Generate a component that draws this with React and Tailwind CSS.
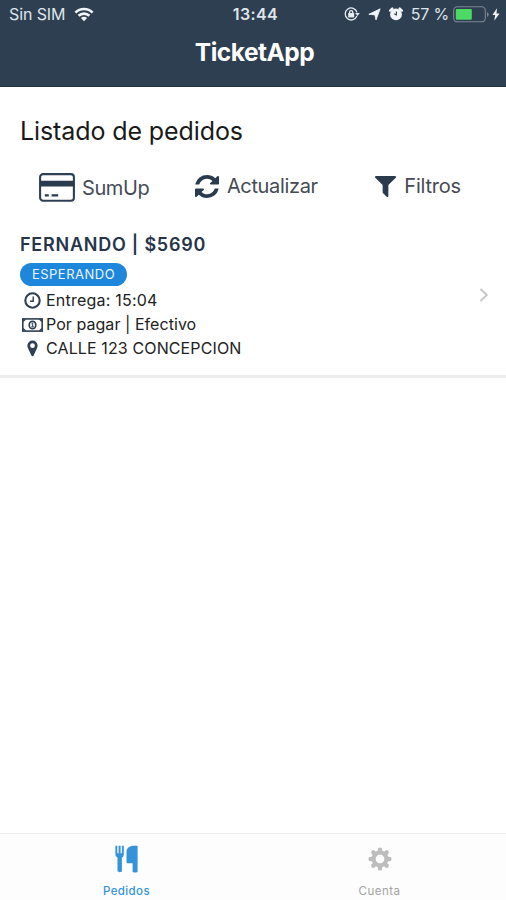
// Iconos de la barra de estado
const WifiIcon = () => (
    <svg className="w-[20px] h-[15px]" viewBox="0 0 20 15" fill="none" stroke="#f1f5f8" strokeWidth="2.6">
        <path d="M1.4 5.6a12.2 12.2 0 0 1 17.2 0" />
        <path d="M4.6 8.8a7.7 7.7 0 0 1 10.8 0" />
        <path d="M10 14.2 6.9 11.1a4.4 4.4 0 0 1 6.2 0z" fill="#f1f5f8" stroke="none" />
    </svg>
);

const RotationLockIcon = () => (
    <svg className="w-[16px] h-[14px]" viewBox="0 0 16 14" fill="none" stroke="#e8edf1" strokeWidth="1.3">
        <path d="M12.9 8.9A6 6 0 1 1 13 5.4" />
        <path d="m11.2 6 4.6 0-2.3 3z" fill="#e8edf1" stroke="none" />
        <rect x="4.2" y="6" width="6" height="4.4" fill="#e8edf1" stroke="none" />
        <path d="M5.6 6.5V5.2a1.6 1.6 0 0 1 3.2 0v1.3" />
    </svg>
);

const LocationIcon = () => (
    <svg className="w-[13px] h-[13px]" viewBox="0 0 13 13" fill="#f1f5f8" stroke="#f1f5f8" strokeWidth=".8" strokeLinejoin="round">
        <path d="M12.2.8 8 12 6.9 6.9.8 6.3z" />
    </svg>
);

const AlarmIcon = () => (
    <svg className="w-[14px] h-[14px]" viewBox="0 0 14 14">
        <circle cx="7" cy="7.4" r="5.9" fill="#f1f5f8" />
        <path d="M1.2 3.6 3.3 1.6M12.8 3.6l-2.1-2" stroke="#f1f5f8" strokeWidth="2.4" strokeLinecap="round" />
        <path d="M7.4 4.6v3.3L5.2 6.8" fill="none" stroke="#2e3f51" strokeWidth="1.1" />
    </svg>
);

const BatteryIcon = () => (
    <svg className="w-[37px] h-[17px]" viewBox="0 0 37 17">
        <rect x=".7" y=".8" width="31.6" height="15" rx="3.6" fill="none" stroke="#7c8894" strokeWidth="1.1" />
        <rect x="2.8" y="3" width="16" height="10.8" rx="1" fill="#4cd964" />
        <path d="M34 6v5a2.7 2.7 0 0 0 0-5z" fill="#7c8894" />
    </svg>
);

const BoltIcon = () => (
    <svg className="w-[8px] h-[13px]" viewBox="0 0 8 13" fill="#f1f5f8">
        <path d="M5 .3.4 7.1h2.8L2.2 12.7 7.6 5.4H4.5z" />
    </svg>
);

// Iconos de las acciones
const CardIcon = () => (
    <svg className="w-[36px] h-[29px]" viewBox="0 0 36 29">
        <rect x="1.1" y="1.1" width="33.8" height="26.6" rx="3" fill="none" stroke="#2e4052" strokeWidth="2.1" />
        <path d="M1 7.8h34v5.8H1z" fill="#2a3b4e" />
        <path d="M5.8 22.4h4M12.6 22.4h6.6" stroke="#2a3b4e" strokeWidth="2.2" />
    </svg>
);

const RefreshIcon = () => (
    <svg className="w-[24px] h-[23px]" viewBox="0 0 1536 1536" preserveAspectRatio="none" fill="#2a3b4e">
        <path d="M1511 928q0 5-1 7-64 268-268 434.500t-478 166.500q-146 0-282.500-55t-243.500-157l-129 129q-19 19-45 19t-45-19-19-45v-448q0-26 19-45t45-19h448q26 0 45 19t19 45-19 45l-137 137q71 66 161 102t187 36q134 0 250-65t186-179q11-17 53-117 8-23 30-23h192q13 0 22.500 9.500t9.500 22.500zm25-800v448q0 26-19 45t-45 19h-448q-26 0-45-19t-19-45 19-45l138-138q-148-137-349-137-134 0-250 65t-186 179q-11 17-53 117-8 23-30 23h-199q-13 0-22.500-9.500t-9.500-22.500v-7q65-268 270-434.500t480-166.500q146 0 284 55.500t245 156.500l130-129q19-19 45-19t45 19 19 45z" />
    </svg>
);

const FilterIcon = () => (
    <svg className="w-[21px] h-[21px]" viewBox="192 256 1408 1408" fill="#2a3b4e">
        <path d="M1595 295q17 41-14 70l-493 493v742q0 42-39 59-13 5-25 5-27 0-45-19l-256-256q-19-19-19-45v-486l-493-493q-31-29-14-70 17-39 59-39h1280q42 0 59 39z" />
    </svg>
);

// Iconos del pedido
const ClockIcon = () => (
    <svg className="w-[17px] h-[17px]" viewBox="0 0 17 17" fill="none" stroke="#2e4052">
        <circle cx="8.5" cy="8.5" r="7.2" strokeWidth="2.1" />
        <path d="M9.2 4.5v4.7H6" strokeWidth="1.4" />
    </svg>
);

const MoneyIcon = () => (
    <svg className="w-[21px] h-[14px]" viewBox="0 0 21 14" fill="none" stroke="#2e4052">
        <rect x=".8" y=".9" width="19.4" height="12.2" strokeWidth="1.6" />
        <path d="M1.2 1.2h3.2L1.2 4.2zM19.8 1.2h-3.200l3.200 3zM1.2 12.8h3.200L1.2 9.8zM19.8 12.8h-3.200l3.200-3z" fill="#2e4052" stroke="none" />
        <ellipse cx="10.5" cy="7" rx="3.3" ry="3.7" strokeWidth="1.7" />
        <path d="M9.5 5.9l1.2-.8v3.6M9.3 8.8h2.6" strokeWidth="1" />
    </svg>
);

const PinIcon = () => (
    <svg className="w-[11px] h-[17px]" viewBox="0 0 11 17" fill="#2e4052">
        <path
            fillRule="evenodd"
            d="M5.5.5a5.1 5.1 0 0 1 5.100 5.100c0 .8-.1 1.500-.4 2.100L6.600 15.600c-.4.900-1.800.9-2.200 0L.8 7.700C.5 7.100.4 6.400.4 5.600A5.100 5.100 0 0 1 5.500.5zm0 2.800a2.400 2.400 0 1 0 0 4.800 2.400 2.400 0 0 0 0-4.800z"
        />
    </svg>
);

// Iconos del menú inferior
const CutleryIcon = () => (
    <svg className="w-[23px] h-[28px]" viewBox="0 0 23 28" fill="#3593d9">
        <path d="M.4.8h1.900v7.400h1.300V.8h2v7.400h1.300V.8h1.900v8.400c0 1.800-.8 2.900-1.900 3.400v13.400c0 1.600-4.400 1.600-4.400 0V12.600C1.400 12 .4 10.900.4 9.200z" />
        <path d="M22.600 1.200v25.200c0 1.500-5 1.500-5 0v-8.200h-5.200c-.6 0-.9-.4-.9-.9V6.800C11.500 2.900 14.800.7 18.800.7h3.100c.5 0 .7.2.7.5z" />
    </svg>
);

const teeth = [0, 45, 90, 135];

const GearIcon = () => (
    <svg className="w-[24px] h-[24px]" viewBox="0 0 24 24" stroke="#bdbdbd">
        {teeth.map((angle) => (
            <g key={angle} transform={`rotate(${angle} 12 12)`} strokeWidth="4.4" strokeLinecap="round">
                <path d="M12 2.6v2.6M12 18.8v2.6" />
            </g>
        ))}
        <circle cx="12" cy="12" r="6.4" fill="none" strokeWidth="4" />
    </svg>
);

const StatusBar = () => (
    <div className="grid grid-cols-[1fr_auto_1fr] items-center h-[28px] text-[16px] text-[#dfe5ea]">
        <div className="flex items-center gap-[9px] pl-[9px]">
            <span className="tracking-[-0.1px]">Sin SIM</span>
            <WifiIcon />
        </div>
        <span className="font-semibold tracking-[0.4px] pl-[5px]">13:44</span>
        <div className="flex items-center justify-end pr-[6px]">
            <RotationLockIcon />
            <span className="ml-[8px]"><LocationIcon /></span>
            <span className="ml-[8px] mr-[8px]"><AlarmIcon /></span>
            <span className="whitespace-nowrap tracking-[-0.2px]">57 %</span>
            <span className="ml-[4px]"><BatteryIcon /></span>
            <span className="ml-[2px]"><BoltIcon /></span>
        </div>
    </div>
);

const OrderItem = ({ order }) => (
    <div className="flex items-center justify-between h-[153px] pl-[20px] pr-[17px] pt-px border-b-[3px] border-[#ededed] text-[#222]">
        <div className="h-full pt-[7px]">
            <h2 className="text-[18px] leading-[24px] font-semibold tracking-[0.76px] text-[#26354a]">{order.title}</h2>
            <span className="flex items-center justify-center w-[107px] h-[23px] mt-[6px] rounded-full bg-[#1e87dc] text-[13px] tracking-[0.5px] text-[#eaf5fd]">
                {order.status}
            </span>
            <ul className="mt-[3px] text-[16px] leading-[23.8px] tracking-[0.12px]">
                <li className="flex items-center">
                    <span className="flex justify-center w-[24px] mr-[2px]"><ClockIcon /></span>
                    <span className="tracking-[0.22px]">{order.delivery}</span>
                </li>
                <li className="flex items-center">
                    <span className="flex justify-center w-[24px] mr-[2px]"><MoneyIcon /></span>
                    <span className="tracking-[0.05px]">{order.payment}</span>
                </li>
                <li className="flex items-center">
                    <span className="flex justify-center w-[24px] mr-[2px]"><PinIcon /></span>
                    <span>{order.address}</span>
                </li>
            </ul>
        </div>
        <svg className="w-[10px] h-[16px] -mt-[12px]" viewBox="0 0 10 16" fill="none" stroke="#c9c9cb" strokeWidth="2">
            <path d="m1.5 2 6.3 6-6.3 6" />
        </svg>
    </div>
);

const orders = [
    {
        id: 1,
        title: 'FERNANDO | $5690',
        status: 'ESPERANDO',
        delivery: 'Entrega: 15:04',
        payment: 'Por pagar | Efectivo',
        address: 'CALLE 123 CONCEPCION',
    },
];

export default function App() {
    return (
        <div className="flex flex-col w-[506px] h-[900px] overflow-hidden bg-white font-['Inter',sans-serif]">
            <header className="h-[87px] shrink-0 bg-[#2e3f51] border-b border-[#243342]">
                <StatusBar />
                <h1 className="text-center text-[24.5px] leading-[32px] mt-[8px] pl-[3px] font-bold tracking-[-0.5px] text-white">TicketApp</h1>
            </header>

            <main className="flex-1">
                <h2 className="pl-[20px] mt-[28px] text-[25px] leading-[32px] tracking-[-0.1px] text-[#1a1a1a]">Listado de pedidos</h2>

                {/* Acciones sobre el listado */}
                <div className="flex justify-between h-[40px] mt-[20px] pl-[39px] pr-[45px] text-[20px] leading-[28px] text-[#454b54]">
                    <div className="flex items-center h-[41px] gap-[7px]">
                        <CardIcon />
                        <span className="tracking-[-0.4px]">SumUp</span>
                    </div>
                    <div className="flex items-center h-[38px] gap-[8px] pr-[12px]">
                        <RefreshIcon />
                        <span className="tracking-[-0.35px]">Actualizar</span>
                    </div>
                    <div className="flex items-center h-[38px] gap-[8px]">
                        <FilterIcon />
                        <span className="tracking-[-0.2px]">Filtros</span>
                    </div>
                </div>

                <div className="mt-[18px]">
                    {orders.map((order) => (
                        <OrderItem key={order.id} order={order} />
                    ))}
                </div>
            </main>

            <nav className="grid grid-cols-2 h-[67px] shrink-0 border-t border-[#ececec] bg-[#fdfdfd] text-[11.5px] leading-[16px]">
                <div className="flex flex-col items-center pt-[11px] text-[#3593d9] font-medium">
                    <CutleryIcon />
                    <span className="mt-[10px] tracking-[0.4px]">Pedidos</span>
                </div>
                <div className="flex flex-col items-center pt-[13px] text-[#a3a3a3]">
                    <GearIcon />
                    <span className="mt-[12px] tracking-[0.5px]">Cuenta</span>
                </div>
            </nav>
        </div>
    );
}
